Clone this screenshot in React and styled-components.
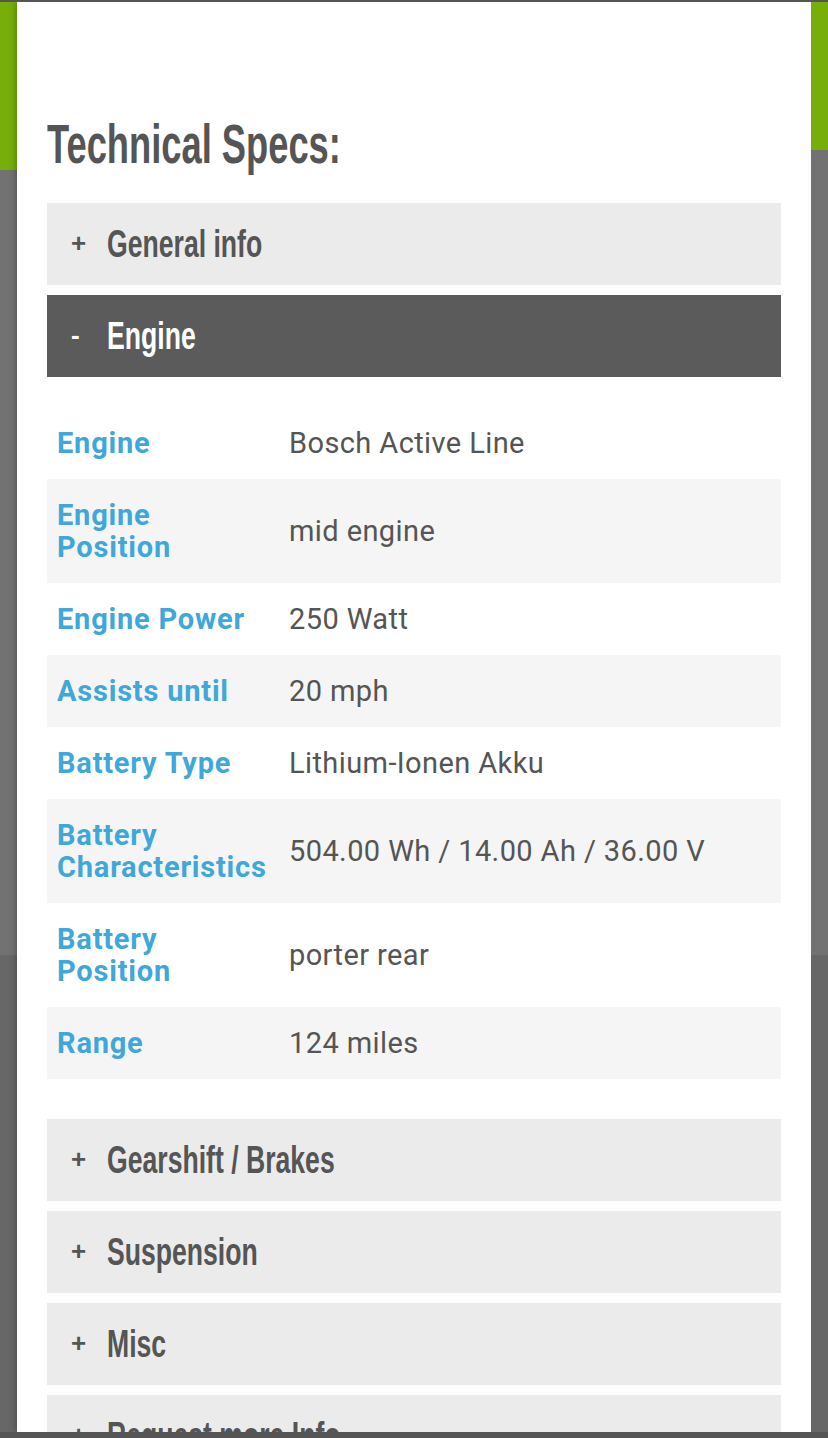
import React from "react"
import styled, { createGlobalStyle } from "styled-components"

const Global = createGlobalStyle`
  html, body {
    margin: 0;
    padding: 0;
    height: 1438px;
    overflow: hidden;
    background: #555555;
  }
  * { box-sizing: border-box; }
`

// no condensed face is installed, so the DIN-condensed look is a squeezed Arial-metric bold
const headFont = `"Liberation Sans", Arial, sans-serif`
const bodyFont = `Roboto, "Open Sans", "Liberation Sans", sans-serif`

const Screen = styled.div`
  height: 1438px;
  display: flex;
  flex-direction: column;
`

const EdgeBar = styled.div`
  height: ${(p) => p.$h}px;
  flex: none;
  background: #555555;
  position: relative;
  z-index: 2;
`

const Stage = styled.div`
  flex: 1;
  min-height: 0;
  display: flex;
`

const Gutter = styled.div`
  width: 17px;
  flex: none;
  display: flex;
  flex-direction: column;
`

const GutterBand = styled.div`
  height: ${(p) => (p.$h ? `${p.$h}px` : "auto")};
  flex: ${(p) => (p.$h ? "none" : "1")};
  background: ${(p) => p.$bg};
`

const Modal = styled.div`
  flex: 1;
  min-width: 0;
  background: #ffffff;
  box-shadow: 0 0 8px rgba(0, 0, 0, 0.35);
  padding: 0 30px;
  overflow: hidden;
`

const Title = styled.h2`
  margin: 0;
  padding: 112px 0 0;
  height: 201px;
  font-family: ${headFont};
  font-weight: 700;
  font-size: 55px;
  line-height: 60px;
  color: #555555;
`

const Squeeze = styled.span`
  display: inline-block;
  white-space: nowrap;
  transform: scaleX(${(p) => p.$x});
  transform-origin: left center;
`

const Section = styled.div`
  display: flex;
  flex-direction: column;
  gap: 10px;
`

const Bar = styled.div`
  height: 82px;
  display: flex;
  align-items: center;
  padding-left: 24px;
  background: ${(p) => (p.$open ? "#5b5b5b" : "#ebebeb")};
  color: ${(p) => (p.$open ? "#ffffff" : "#555555")};
  font-family: ${headFont};
  font-weight: 700;
`

const Sign = styled.span`
  width: 36px;
  flex: none;
  font-size: 26px;
  line-height: 1;
  padding-bottom: 2px;
`

const BarLabel = styled.span`
  font-size: 38px;
  line-height: 1;
`

const Table = styled.div`
  margin: 30px 0 40px;
  display: flex;
  flex-direction: column;
`

const Row = styled.div`
  display: grid;
  grid-template-columns: 232px 1fr;
  align-items: center;
  padding: 20px 0;
  background: ${(p) => (p.$shaded ? "#f5f5f5" : "#ffffff")};
  font-family: ${bodyFont};
  font-size: 29px;
  line-height: 32px;
`

const Key = styled.div`
  padding-left: 10px;
  padding-right: 11px;
  font-weight: 700;
  color: #3fa7da;
  letter-spacing: 0.8px;
`

const Value = styled.div`
  padding-left: 10px;
  color: #555555;
  letter-spacing: 0.4px;
`

const specs = [
  ["Engine", "Bosch Active Line"],
  ["Engine Position", "mid engine"],
  ["Engine Power", "250 Watt"],
  ["Assists until", "20 mph"],
  ["Battery Type", "Lithium-Ionen Akku"],
  ["Battery Characteristics", "504.00 Wh / 14.00 Ah / 36.00 V"],
  ["Battery Position", "porter rear"],
  ["Range", "124 miles"],
]

function AccordionBar({ label, open }) {
  return (
    <Bar $open={open}>
      <Sign>{open ? "-" : "+"}</Sign>
      <BarLabel>
        <Squeeze $x={0.7}>{label}</Squeeze>
      </BarLabel>
    </Bar>
  )
}

export default function App() {
  return (
    <>
      <Global />
      <Screen>
        <EdgeBar $h={2} />
        <Stage>
          <Gutter>
            <GutterBand $h={168} $bg="#77ae0a" />
            <GutterBand $h={785} $bg="#727272" />
            <GutterBand $bg="#676767" />
          </Gutter>
          <Modal>
            <Title>
              <Squeeze $x={0.66}>Technical Specs:</Squeeze>
            </Title>
            <Section>
              <AccordionBar label="General info" />
              <AccordionBar label="Engine" open />
            </Section>
            <Table>
              {specs.map(([k, v], i) => (
                <Row key={k} $shaded={i % 2 === 1}>
                  <Key>{k}</Key>
                  <Value>{v}</Value>
                </Row>
              ))}
            </Table>
            <Section>
              <AccordionBar label="Gearshift / Brakes" />
              <AccordionBar label="Suspension" />
              <AccordionBar label="Misc" />
              <AccordionBar label="Request more Info" />
            </Section>
          </Modal>
          <Gutter>
            <GutterBand $h={148} $bg="#77ae0a" />
            <GutterBand $h={805} $bg="#727272" />
            <GutterBand $bg="#676767" />
          </Gutter>
        </Stage>
        <EdgeBar $h={6} />
      </Screen>
    </>
  )
}
